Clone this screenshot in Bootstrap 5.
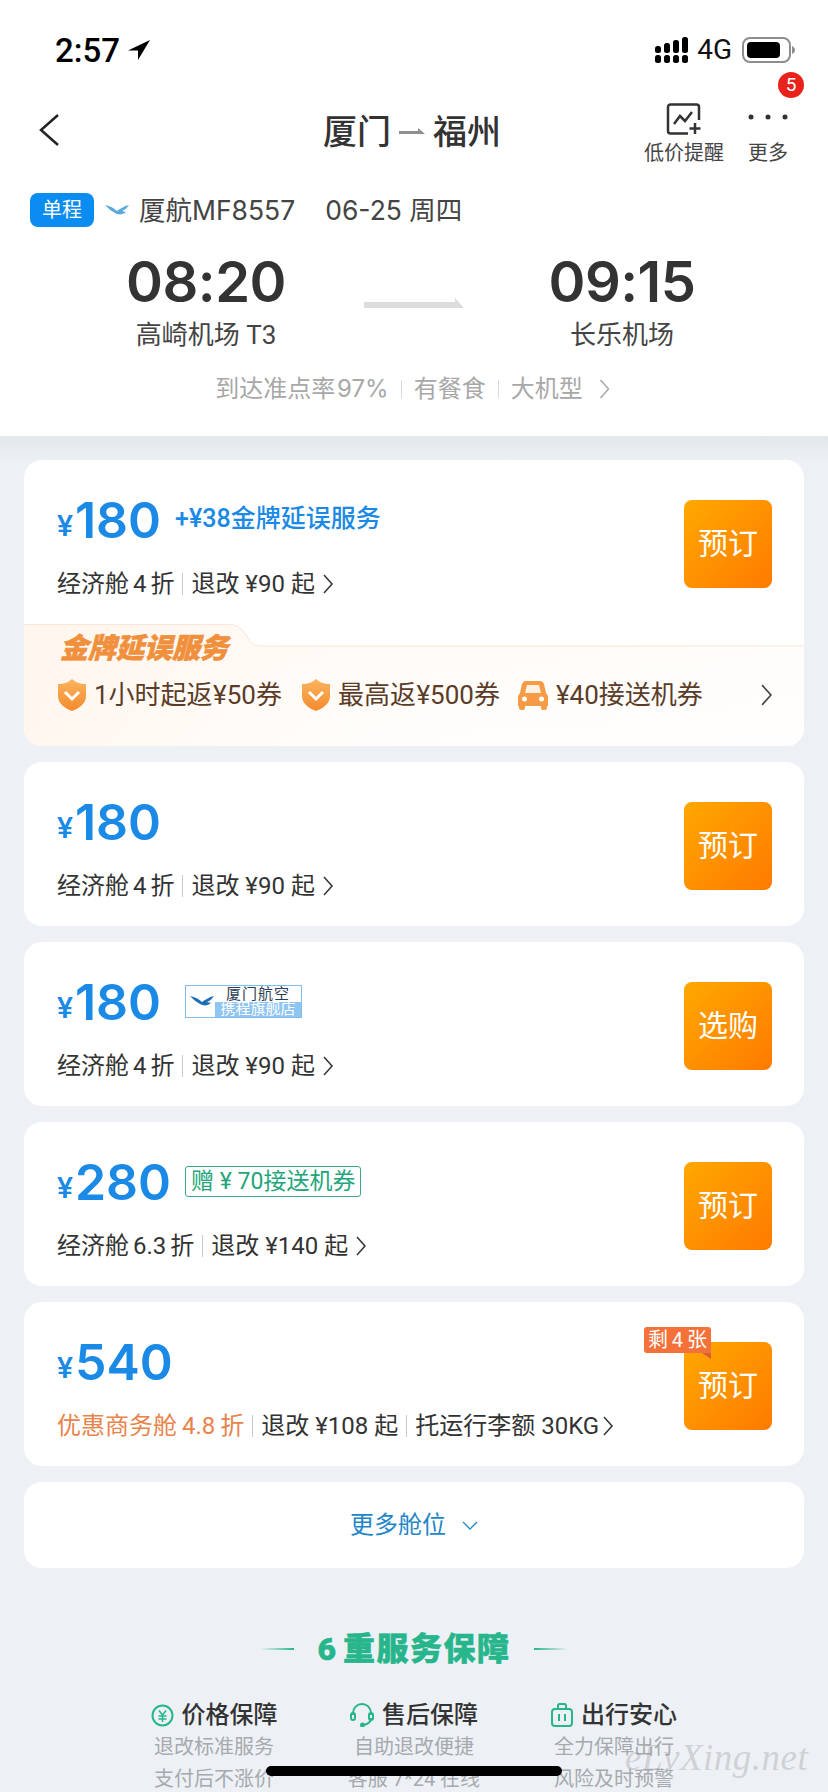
<!DOCTYPE html>
<html lang="zh-CN">
<head>
  <meta charset="UTF-8">
  <title>厦门 - 福州</title>
  <link href="https://cdn.jsdelivr.net/npm/bootstrap@5.3.0/dist/css/bootstrap.min.css" rel="stylesheet">
  <style>
    html, body { height: 1792px; overflow: hidden; }
    body { font-family: Roboto, "Noto Sans CJK SC", sans-serif; background: #edf1f6; color: #333; position: relative; }
    .head-panel { background: #fff; padding-bottom: 32px; }
    .status-row { height: 98px; padding: 2px 32px 0 55px; }
    .clock { font-size: 33px; font-weight: 500; color: #000; line-height: 1; }
    .net { font-size: 28px; color: #111; line-height: 1; }
    .nav-row { height: 68px; padding: 0 40px 0 36px; display: grid; grid-template-columns: 1fr auto 1fr; align-items: center; position: relative; }
    .back-icon { margin: 0 0 5px 2px; }
    .route { font-size: 34px; font-weight: 500; line-height: 1; color: #333; }
    .act-wrap { padding-top: 4px; }
    .act-label { font-size: 20px; line-height: 24px; color: #444; }
    .act-icon { height: 38px; }
    .count-dot { position: absolute; top: -27px; right: -16px; width: 26px; height: 26px; border-radius: 50%; background: #e8231c; color: #fff; font-size: 19px; line-height: 26px; padding: 0; font-weight: 400; }
    .ticket-row { margin-top: 27px; padding-left: 30px; height: 34px; }
    .one-way { width: 64px; height: 34px; line-height: 34px; padding: 0; background: #0a8cf0; color: #fff; font-size: 20px; font-weight: 400; border-radius: 8px; }
    .ticket-text { font-family: Inter, "Noto Sans CJK SC", sans-serif; font-size: 26.500px; line-height: 34px; color: #444; }
    .time-row { margin-top: 26px; }
    .time-side { width: 260px; text-align: center; }
    .time-mid { width: 156px; }
    .time-big { font-family: Inter, sans-serif; font-size: 56px; font-weight: 600; letter-spacing: -.5px; line-height: 58px; color: #333; }
    .airport { margin-top: 7px; font-size: 26px; line-height: 34px; color: #444; }
    .info-row { margin-top: 22px; height: 30px; padding-right: 3px; font-size: 24px; line-height: 30px; color: #a8a8a8; }
    .info-row span { font-family: Inter, "Noto Sans CJK SC", sans-serif; word-spacing: -5px; }
    .tick { display: inline-block; width: 1px; height: 18px; background: #d8d8d8; }

    .fare-list { padding: 24px 24px 0; gap: 16px; background: linear-gradient(#e3e6eb, #edf1f6 26px); }
    .fare-card { border: 0; border-radius: 18px; overflow: hidden; }
    .fare-main { height: 164px; padding: 40px 32px 0 33px; }
    .fare-left { margin-top: -5px; }
    .price-row { height: 50px; }
    .yen { font-size: 30px; font-weight: 500; color: #1a8ae6; line-height: 1; margin-top: 12px; }
    .amount { font-family: Inter, sans-serif; font-size: 50px; font-weight: 600; color: #1a8ae6; line-height: 50px; margin-left: 2px; }
    .price-extra { font-size: 25px; font-weight: 500; color: #1a8ae6; margin: 0 0 2px 14px; white-space: nowrap; }
    .sub-row { margin-top: 22px; height: 34px; font-size: 24px; line-height: 34px; color: #333; white-space: nowrap; }
    .sub-row .tick { height: 22px; background: #c9c9c9; margin: 0 8px; }
    .tight-gap { word-spacing: -2px; }
    .sale-text { color: #e8834a; word-spacing: -1px; }
    .fare-btn { width: 88px; height: 88px; padding: 0; border: 0; border-radius: 8px; font-size: 30px; line-height: 1; color: #fff; background: linear-gradient(135deg, #ffa800, #ff7a00); position: relative; }
    .left-tag { position: absolute; left: -40px; top: -15px; width: 67px; height: 26px; line-height: 26px; border-radius: 3px 3px 0 3px; background: #f5713a; color: #fff; font-size: 20px; word-spacing: -1px; text-align: center; white-space: nowrap; }
    .left-tag::after { content: ""; position: absolute; right: 0; top: 26px; border-left: 9px solid transparent; border-top: 6px solid #d9602e; }

    .air-tag { width: 117px; height: 33px; margin: 0 0 2px 24px; border: 1px solid #82bcec; position: relative; background: #fff; overflow: hidden; }
    .air-tag-top { font-size: 15px; line-height: 16px; color: #2d3f55; padding-left: 40px; letter-spacing: 1px; white-space: nowrap; }
    .air-tag-low { position: absolute; left: 29px; right: 0; bottom: 0; height: 15px; line-height: 15px; background: #8ec5f2; color: #fff; font-size: 15px; text-align: center; white-space: nowrap; }
    .air-tag svg { position: absolute; left: 4px; top: 9px; }
    .gift-tag { height: 31px; line-height: 29px; margin: 0 0 2px 14px; padding: 0 5px; border: 1px solid #3aa98a; border-radius: 3px; font-size: 23px; color: #22a57a; white-space: nowrap; }

    .gold-box { height: 122px; position: relative; padding: 7px 32px 0 36px; }
    .gold-bg { position: absolute; left: 0; top: 0; }
    .gold-title { position: relative; font-size: 28px; font-weight: 900; font-style: italic; line-height: 36px; color: #f0903c; -webkit-text-stroke: .6px #f0903c; }
    .gold-items { position: relative; margin-top: 11px; margin-left: -2px; height: 34px; font-size: 26px; word-spacing: -6px; line-height: 34px; color: #5a3c28; white-space: nowrap; }
    .more-card { height: 86px; font-size: 24px; color: #1f86c8; }

    .assure-title { margin-top: 61px; height: 40px; }
    .assure-head { font-size: 32px; font-weight: 900; letter-spacing: 1.500px; word-spacing: -4px; line-height: 40px; color: #27b58b; margin: 0 23px; -webkit-text-stroke: .5px #27b58b; }
    .assure-line { width: 34px; height: 2px; }
    .assure-line.from-l { background: linear-gradient(90deg, transparent, #27b58b); }
    .assure-line.from-r { background: linear-gradient(90deg, #27b58b, transparent); }
    .assure-row { margin-top: 30px; }
    .assure-col { width: 200px; text-align: center; }
    .assure-name { height: 32px; font-size: 24px; font-weight: 500; line-height: 32px; color: #333; gap: 8px; }
    .assure-desc { font-size: 20px; line-height: 31px; color: #a6a9ad; margin-top: 1px; white-space: nowrap; }
    .home-bar { position: absolute; left: 266px; top: 1766px; width: 296px; height: 10px; border-radius: 5px; background: #000; }
    .stamp { position: absolute; left: 625px; top: 1735px; font-family: "Liberation Serif", serif; font-style: italic; font-size: 37px; letter-spacing: .5px; line-height: 46px; color: rgba(150,150,150,.36); white-space: nowrap; }
  </style>
</head>
<body>

<svg width="0" height="0" class="position-absolute">
  <symbol id="chev" viewBox="0 0 10 20"><path d="M1 1l8 9-8 9" fill="none" stroke="currentColor" stroke-width="1.5"/></symbol>
  <linearGradient id="shieldFill" x1="0" y1="0" x2="0" y2="1"><stop offset="0" stop-color="#fbb45e"/><stop offset="1" stop-color="#f48a2e"/></linearGradient>
  <symbol id="shield" viewBox="0 0 28 32">
    <path d="M14 0c3 3 8 5 14 5v12c0 7-6 12-14 15C6 29 0 24 0 17V5c6 0 11-2 14-5z" fill="url(#shieldFill)"/>
    <path d="M7 13l7 7 7-7" fill="none" stroke="#fff" stroke-width="3"/>
  </symbol>
  <symbol id="egret" viewBox="0 0 24 12">
    <path d="M0 1c5 1 9 3 12 6 3-2 7-5 12-6-2 3-4 5-7 6l4 1c-3 3-8 3-11 1C6 7 3 4 0 1z" fill="currentColor"/>
  </symbol>
</svg>

<div class="head-panel">
  <div class="status-row d-flex align-items-center justify-content-between">
    <div class="d-flex align-items-center gap-2">
      <span class="clock">2:57</span>
      <svg width="22" height="20" viewBox="0 0 22 20"><path d="M22 0L0 10.500h10V20z" fill="#000"/></svg>
    </div>
    <div class="d-flex align-items-center">
      <svg width="34" height="26" viewBox="0 0 34 26" fill="#000">
        <rect x="0" y="18" width="6" height="8" rx="2.500"/><rect x="9" y="18" width="6" height="8" rx="2.500"/><rect x="18" y="18" width="6" height="8" rx="2.500"/><rect x="27" y="18" width="6" height="8" rx="2.500"/>
        <rect x="0" y="9" width="6" height="7" rx="2.500"/><rect x="9" y="6" width="6" height="10" rx="2.500"/><rect x="18" y="3" width="6" height="13" rx="2.500"/><rect x="27" y="0" width="6" height="16" rx="2.500"/>
      </svg>
      <span class="net ms-2">4G</span>
      <svg style="margin-left:10px" width="54" height="26" viewBox="0 0 54 26">
        <rect x="1" y="1" width="47" height="24" rx="7" fill="none" stroke="#8e8e8e" stroke-width="2"/>
        <rect x="5" y="5" width="33" height="16" rx="4" fill="#000"/>
        <path d="M50 9c2 1 3 2 3 4s-1 3-3 4z" fill="#8e8e8e"/>
      </svg>
    </div>
  </div>

  <div class="nav-row">
    <svg class="back-icon" width="22" height="32" viewBox="0 0 22 32"><path d="M20 1L3 16l17 15" fill="none" stroke="#222" stroke-width="2.500"/></svg>
    <div class="route d-flex align-items-center">
      <span>厦门</span>
      <svg class="mx-2" width="26" height="8" viewBox="0 0 26 8"><path d="M0 3h19V0l7 6H0z" fill="#8f8f8f"/></svg>
      <span>福州</span>
    </div>
    <div class="act-wrap d-flex justify-content-end gap-4 position-relative">
      <div class="text-center">
        <div class="act-icon">
          <svg width="38" height="32" viewBox="0 0 38 32" fill="none" stroke="#333" stroke-width="2.500">
            <path d="M34 17V4a2.500 2.500 0 0 0-2.500-2.500h-26A2.500 2.500 0 0 0 3 4v24a2.500 2.500 0 0 0 2.500 2.500H23"/>
            <path d="M9 21l6-8 5 5 7-9"/>
            <path d="M30 20v11M24.500 25.500h11"/>
          </svg>
        </div>
        <div class="act-label">低价提醒</div>
      </div>
      <div class="text-center">
        <div class="act-icon">
          <svg width="40" height="32" viewBox="0 0 40 32" fill="#333"><circle cx="3" cy="14" r="2.500"/><circle cx="20" cy="14" r="2.500"/><circle cx="37" cy="14" r="2.500"/></svg>
        </div>
        <div class="act-label">更多</div>
      </div>
      <span class="badge count-dot">5</span>
    </div>
  </div>

  <div class="ticket-row d-flex align-items-center">
    <span class="badge one-way">单程</span>
    <svg style="color:#5aa9dc;margin-left:11px" width="24" height="12"><use href="#egret"/></svg>
    <span class="ticket-text" style="margin-left:10px">厦航MF8557</span>
    <span class="ticket-text" style="margin-left:30px">06-25 周四</span>
  </div>

  <div class="time-row d-flex justify-content-center">
    <div class="time-side">
      <div class="time-big">08:20</div>
      <div class="airport">高崎机场 T3</div>
    </div>
    <div class="time-mid d-flex justify-content-center">
      <svg width="100" height="66" viewBox="0 0 100 66"><path d="M0 49h91v-4l9 10H0z" fill="#dcdcdc"/></svg>
    </div>
    <div class="time-side">
      <div class="time-big">09:15</div>
      <div class="airport">长乐机场</div>
    </div>
  </div>

  <div class="info-row d-flex align-items-center justify-content-center gap-2">
    <span>到达准点率 97%</span><i class="tick mx-1"></i>
    <span>有餐食</span><i class="tick mx-1"></i>
    <span>大机型</span>
    <svg class="ms-2" width="11" height="20"><use href="#chev"/></svg>
  </div>
</div>

<div class="fare-list d-flex flex-column">

  <div class="card fare-card">
    <div class="fare-main d-flex justify-content-between">
      <div class="fare-left">
        <div class="price-row d-flex align-items-center">
          <span class="yen">¥</span><span class="amount">180</span>
          <span class="price-extra">+¥38金牌延误服务</span>
        </div>
        <div class="sub-row d-flex align-items-center">
          <span class="tight-gap">经济舱 4 折</span><i class="tick"></i><span>退改 ¥90 起</span>
          <svg class="ms-2" width="10" height="20"><use href="#chev"/></svg>
        </div>
      </div>
      <button class="btn fare-btn">预订</button>
    </div>
    <div class="gold-box">
      <svg class="gold-bg" width="780" height="122" viewBox="0 0 780 122">
        <defs>
          <linearGradient id="goldV" x1="0" y1="0" x2="0" y2="1"><stop offset="0" stop-color="#fff4ea"/><stop offset="1" stop-color="#fffdfb"/></linearGradient>
          <linearGradient id="goldH" x1="0" y1="0" x2="1" y2="0"><stop offset="0" stop-color="#fff6ee" stop-opacity=".9"/><stop offset=".6" stop-color="#fff" stop-opacity=".55"/><stop offset="1" stop-color="#fff" stop-opacity=".75"/></linearGradient>
        </defs>
        <path d="M0 0H204C214 0 218 5 222 11C227 20 230 22 240 22H780V122H0z" fill="url(#goldV)"/>
        <path d="M0 0H204C214 0 218 5 222 11C227 20 230 22 240 22H780V122H0z" fill="url(#goldH)"/>
        <path d="M0 .5H204C214 .5 218 5 222 11C227 20 230 22 240 22H780" fill="none" stroke="#fbe6d6" stroke-width="1"/>
      </svg>
      <div class="gold-title">金牌延误服务</div>
      <div class="gold-items d-flex align-items-center">
        <svg width="28" height="32"><use href="#shield"/></svg>
        <span class="ms-2">1小时起返 ¥50券</span>
        <svg width="28" height="32" style="margin-left:20px"><use href="#shield"/></svg>
        <span class="ms-2">最高返 ¥500券</span>
        <svg width="30" height="32" viewBox="0 0 30 32" style="margin-left:18px">
          <path d="M8 2h14c2 0 3 1 4 3l2 9 2 3v10h-1v2a2 2 0 0 1-2 2h-2a2 2 0 0 1-2-2v-2H7v2a2 2 0 0 1-2 2H3a2 2 0 0 1-2-2v-2H0V17l2-3 2-9c1-2 2-3 4-3z" fill="#f59a45"/>
          <path d="M9 6h12l2 8H7z" fill="#fff" opacity=".85"/>
          <circle cx="6.500" cy="20" r="2.500" fill="#fff"/><circle cx="23.500" cy="20" r="2.500" fill="#fff"/>
        </svg>
        <span class="ms-2">¥40接送机券</span>
        <svg class="ms-auto" width="11" height="22" style="color:#444"><use href="#chev"/></svg>
      </div>
    </div>
  </div>

  <div class="card fare-card">
    <div class="fare-main d-flex justify-content-between">
      <div class="fare-left">
        <div class="price-row d-flex align-items-center"><span class="yen">¥</span><span class="amount">180</span></div>
        <div class="sub-row d-flex align-items-center">
          <span class="tight-gap">经济舱 4 折</span><i class="tick"></i><span>退改 ¥90 起</span>
          <svg class="ms-2" width="10" height="20"><use href="#chev"/></svg>
        </div>
      </div>
      <button class="btn fare-btn">预订</button>
    </div>
  </div>

  <div class="card fare-card">
    <div class="fare-main d-flex justify-content-between">
      <div class="fare-left">
        <div class="price-row d-flex align-items-center">
          <span class="yen">¥</span><span class="amount">180</span>
          <div class="air-tag">
            <svg width="24" height="12" style="color:#1c6fb5"><use href="#egret"/></svg>
            <div class="air-tag-top">厦门航空</div>
            <div class="air-tag-low">携程旗舰店</div>
          </div>
        </div>
        <div class="sub-row d-flex align-items-center">
          <span class="tight-gap">经济舱 4 折</span><i class="tick"></i><span>退改 ¥90 起</span>
          <svg class="ms-2" width="10" height="20"><use href="#chev"/></svg>
        </div>
      </div>
      <button class="btn fare-btn">选购</button>
    </div>
  </div>

  <div class="card fare-card">
    <div class="fare-main d-flex justify-content-between">
      <div class="fare-left">
        <div class="price-row d-flex align-items-center">
          <span class="yen">¥</span><span class="amount">280</span>
          <span class="gift-tag">赠 ¥ 70接送机券</span>
        </div>
        <div class="sub-row d-flex align-items-center">
          <span class="tight-gap">经济舱 6.3 折</span><i class="tick"></i><span>退改 ¥140 起</span>
          <svg class="ms-2" width="10" height="20"><use href="#chev"/></svg>
        </div>
      </div>
      <button class="btn fare-btn">预订</button>
    </div>
  </div>

  <div class="card fare-card">
    <div class="fare-main d-flex justify-content-between">
      <div class="fare-left">
        <div class="price-row d-flex align-items-center"><span class="yen">¥</span><span class="amount">540</span></div>
        <div class="sub-row d-flex align-items-center">
          <span class="sale-text">优惠商务舱 4.8 折</span><i class="tick"></i><span>退改 ¥108 起</span><i class="tick"></i><span>托运行李额 30KG</span>
          <svg class="ms-1" width="10" height="20"><use href="#chev"/></svg>
        </div>
      </div>
      <button class="btn fare-btn">预订<span class="left-tag">剩 4 张</span></button>
    </div>
  </div>

  <div class="card fare-card more-card d-flex flex-row align-items-center justify-content-center">
    <span>更多舱位</span>
    <svg class="ms-3" width="16" height="9" viewBox="0 0 16 9"><path d="M1 1l7 7 7-7" fill="none" stroke="currentColor" stroke-width="1.300"/></svg>
  </div>
</div>

<div class="assure-title d-flex align-items-center justify-content-center">
  <i class="assure-line from-l"></i>
  <span class="assure-head">6 重服务保障</span>
  <i class="assure-line from-r"></i>
</div>

<div class="assure-row d-flex justify-content-center">
  <div class="assure-col">
    <div class="assure-name d-flex align-items-center justify-content-center">
      <svg width="23" height="23" viewBox="0 0 23 23" fill="none" stroke="#27b58b" stroke-width="2"><circle cx="11.500" cy="11.500" r="10"/><path d="M8 6.500l3.500 4.500L15 6.500M7.500 12h8M7.500 15h8M11.500 11v7" stroke-width="1.500"/></svg>
      <span>价格保障</span>
    </div>
    <div class="assure-desc">退改标准服务</div>
    <div class="assure-desc">支付后不涨价</div>
  </div>
  <div class="assure-col">
    <div class="assure-name d-flex align-items-center justify-content-center">
      <svg width="24" height="24" viewBox="0 0 24 24" fill="none" stroke="#27b58b" stroke-width="2"><path d="M3 12V10a9 9 0 0 1 18 0v2M21 15c0 4-3 6-7 7"/><rect x="1" y="10" width="4" height="7" rx="2"/><rect x="19" y="10" width="4" height="7" rx="2"/><circle cx="12.500" cy="22" r="1.500" fill="#27b58b"/></svg>
      <span>售后保障</span>
    </div>
    <div class="assure-desc">自助退改便捷</div>
    <div class="assure-desc">客服 7*24 在线</div>
  </div>
  <div class="assure-col">
    <div class="assure-name d-flex align-items-center justify-content-center">
      <svg width="22" height="24" viewBox="0 0 22 24" fill="none" stroke="#27b58b" stroke-width="2"><rect x="1" y="6" width="20" height="17" rx="3"/><path d="M7 6V2.500A1.500 1.500 0 0 1 8.500 1h5A1.500 1.500 0 0 1 15 2.500V6M8 11v7M14 11v7"/></svg>
      <span>出行安心</span>
    </div>
    <div class="assure-desc">全力保障出行</div>
    <div class="assure-desc">风险及时预警</div>
  </div>
</div>

<div class="home-bar"></div>
<div class="stamp">eLvXing.net</div>

<script src="https://cdn.jsdelivr.net/npm/bootstrap@5.3.0/dist/js/bootstrap.bundle.min.js"></script>
</body>
</html>
